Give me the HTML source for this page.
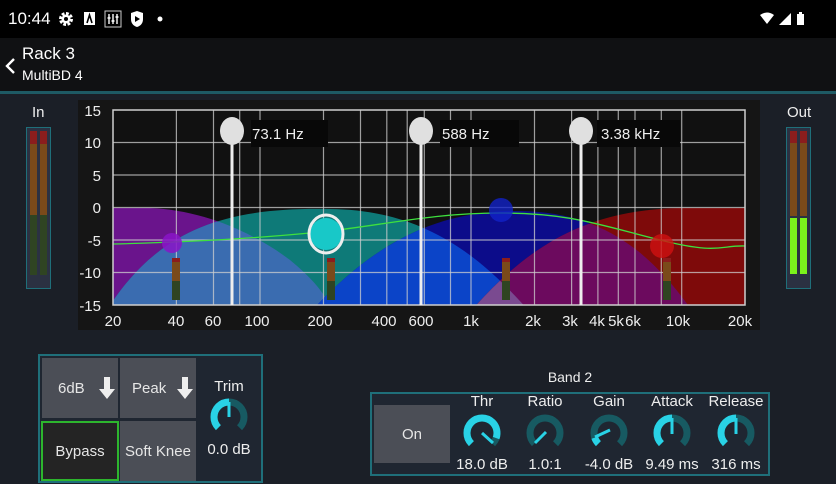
<!DOCTYPE html>
<html><head><meta charset="utf-8">
<style>
*{margin:0;padding:0;box-sizing:border-box}
body{width:836px;height:484px;overflow:hidden;background:#1b1f27;font-family:"Liberation Sans",sans-serif;color:#eee;position:relative}
.abs{position:absolute}
.btn{position:absolute;background:#4b4e56;color:#e6e6e6;font-size:15px;display:flex;align-items:center;justify-content:center}
.lbl{position:absolute;font-size:15px;color:#eee;text-align:center;width:80px}
</style></head><body>
<div class="abs" style="left:0;top:0;width:836px;height:38px;background:#000"></div>
<div class="abs" style="left:8px;top:9px;font-size:17px;color:#fff">10:44</div>
<svg class="abs" style="left:56px;top:9px" width="120" height="20" viewBox="0 0 120 20">
 <circle cx="10" cy="10" r="5" fill="none" stroke="#fff" stroke-width="4" stroke-dasharray="2.5 1.4"/><circle cx="10" cy="10" r="4.5" fill="#fff"/><circle cx="10" cy="10" r="2" fill="#000"/>
 <rect x="28" y="3" width="11" height="13" fill="#fff"/><path d="M31 14 L33.5 6 L36 14" stroke="#000" stroke-width="1.6" fill="none"/>
 <rect x="49" y="2" width="16" height="16" fill="none" stroke="#ccc" stroke-width="1"/><path d="M53 5v10M57 5v10M61 5v10" stroke="#fff" stroke-width="1.4"/><path d="M51.5 9h3M55.5 12h3M59.5 8h3" stroke="#fff" stroke-width="1.5"/>
 <path d="M75 4 L81 2 L87 4 L87 10 Q87 16 81 18 Q75 16 75 10Z" fill="#fff"/><path d="M79 7 L84 10 L79 13Z" fill="#000"/>
 <circle cx="104" cy="10" r="2.5" fill="#fff"/>
</svg>
<svg class="abs" style="left:758px;top:10px" width="54" height="18" viewBox="0 0 54 18">
 <path d="M2 5 Q9 0 16 5 L9 14Z" fill="#fff"/><path d="M21 15 L33 3 L33 15Z" fill="#fff"/><rect x="39" y="4" width="7" height="11" fill="#fff"/><rect x="41" y="2" width="3" height="2" fill="#fff"/>
</svg>
<div class="abs" style="left:0;top:38px;width:836px;height:54px;background:#101113"></div>
<svg class="abs" style="left:4px;top:57px" width="12" height="18"><path d="M10 2 L3 9 L10 16" stroke="#fff" stroke-width="2.4" fill="none"/></svg>
<div class="abs" style="left:22px;top:44px;font-size:17px;color:#fff">Rack 3</div>
<div class="abs" style="left:22px;top:67px;font-size:14px;color:#fff">MultiBD 4</div>
<div class="abs" style="left:0;top:91px;width:836px;height:3px;background:#1e5a64"></div>

<div class="abs" style="left:32px;top:104px;font-size:15px">In</div>
<div class="abs" style="left:26px;top:127px;width:25px;height:162px;border:1px solid #1f6f7a;background:#2b3142"></div>
<div class="abs" style="left:30px;top:131px;width:7px;height:13px;background:#8b1d1d"></div><div class="abs" style="left:40px;top:131px;width:7px;height:13px;background:#8b1d1d"></div>
<div class="abs" style="left:30px;top:144px;width:7px;height:71px;background:#7a4a1a"></div><div class="abs" style="left:40px;top:144px;width:7px;height:71px;background:#7a4a1a"></div>
<div class="abs" style="left:30px;top:215px;width:7px;height:60px;background:#2f4422"></div><div class="abs" style="left:40px;top:215px;width:7px;height:60px;background:#2f4422"></div>

<div class="abs" style="left:787px;top:104px;font-size:15px">Out</div>
<div class="abs" style="left:786px;top:127px;width:25px;height:162px;border:1px solid #1f6f7a;background:#2b3142"></div>
<div class="abs" style="left:790px;top:131px;width:7px;height:12px;background:#8b1d1d"></div><div class="abs" style="left:800px;top:131px;width:7px;height:12px;background:#8b1d1d"></div>
<div class="abs" style="left:790px;top:143px;width:7px;height:73px;background:#7a4a1a"></div><div class="abs" style="left:800px;top:143px;width:7px;height:73px;background:#7a4a1a"></div>
<div class="abs" style="left:790px;top:218px;width:7px;height:56px;background:#7cf21c"></div><div class="abs" style="left:800px;top:218px;width:7px;height:56px;background:#7cf21c"></div>

<svg class="abs" style="left:0;top:0" width="836" height="484" viewBox="0 0 836 484">
<defs>
 <clipPath id="plot"><rect x="113" y="110" width="632" height="195"/></clipPath>
 <clipPath id="cT"><path id="pT" d="M95,330 C150,230 220,207 330,209 C420,210 480,250 545,330 Z"/></clipPath>
 <clipPath id="cB"><path d="M295,330 C370,240 440,210 520,211 C610,212 660,260 705,330 Z"/></clipPath>
</defs>
<rect x="78" y="100" width="682" height="230" fill="#151515"/>
<g clip-path="url(#plot)">
 <rect x="113" y="110" width="632" height="195" fill="#111"/>
 <path d="M100,208 L150,208 C200,210 250,230 290,260 C320,285 330,300 340,330 L100,330 Z" fill="#6a148c"/>
 <path d="M95,330 C150,230 220,207 330,209 C420,210 480,250 545,330 Z" fill="#0e7a78"/>
 <path clip-path="url(#cT)" d="M100,208 L150,208 C200,210 250,230 290,260 C320,285 330,300 340,330 L100,330 Z" fill="#3a6cb0"/>
 <path d="M295,330 C370,240 440,210 520,211 C610,212 660,260 705,330 Z" fill="#0c0c8a"/>
 <path clip-path="url(#cT)" d="M295,330 C370,240 440,210 520,211 C610,212 660,260 705,330 Z" fill="#0b44c8"/>
 <path d="M455,330 C520,250 580,210 680,208 L760,208 L760,330 Z" fill="#7e0a0a"/>
 <path clip-path="url(#cB)" d="M455,330 C520,250 580,210 680,208 L760,208 L760,330 Z" fill="#6c0a5e"/>
 <g clip-path="url(#cT)"><path clip-path="url(#cB)" d="M455,330 C520,250 580,210 680,208 L760,208 L760,330 Z" fill="#7a4a90"/></g>
 <g stroke="#cfcfcf" stroke-opacity="0.75" stroke-width="1.2">
  <path d="M113 142.5H745M113 175H745M113 207.5H745M113 240H745M113 272.5H745"/>
  <path d="M176.4 110V305M213.5 110V305M239.7 110V305M260 110V305M323.5 110V305M360.5 110V305M386.8 110V305M407.2 110V305M424.3 110V305M450.5 110V305M471 110V305M534.5 110V305M571.6 110V305M597.9 110V305M618.3 110V305M635 110V305M661.3 110V305M681.7 110V305"/>
 </g>
 <path d="M113,244 C200,242 260,238 320,232 S430,213 500,213 S600,225 660,240 S720,245 745,246" stroke="#3ee03e" stroke-width="1.3" fill="none"/>
 <circle cx="172" cy="243" r="10" fill="#8a14c8" opacity="0.85"/>
 <circle cx="501" cy="210" r="12" fill="#1222c8" opacity="0.8"/>
 <circle cx="662" cy="246" r="12" fill="#d01010" opacity="0.8"/>
 <circle cx="326" cy="234" r="16" fill="#18c8c8"/>
 <ellipse cx="326" cy="234" rx="17" ry="19" fill="none" stroke="#eee" stroke-width="3"/>
 <g>
  <rect x="172" y="258" width="8" height="4" fill="#8b1d1d"/><rect x="172" y="262" width="8" height="19" fill="#7a4a1a"/><rect x="172" y="281" width="8" height="19" fill="#2f4422"/>
  <rect x="327" y="258" width="8" height="4" fill="#8b1d1d"/><rect x="327" y="262" width="8" height="19" fill="#7a4a1a"/><rect x="327" y="281" width="8" height="19" fill="#2f4422"/>
  <rect x="502" y="258" width="8" height="4" fill="#8b1d1d"/><rect x="502" y="262" width="8" height="19" fill="#7a4a1a"/><rect x="502" y="281" width="8" height="19" fill="#2f4422"/>
  <rect x="663" y="258" width="8" height="4" fill="#8b1d1d"/><rect x="663" y="262" width="8" height="19" fill="#7a4a1a"/><rect x="663" y="281" width="8" height="19" fill="#2f4422"/>
 </g>
</g>
<rect x="113" y="110" width="632" height="195" fill="none" stroke="#cfcfcf" stroke-width="1.5"/>
<g fill="#eee">
 <path d="M230.5 131h3v174h-3zM419.5 131h3v174h-3zM579.5 131h3v174h-3z"/>
 <ellipse cx="232" cy="131" rx="12" ry="14" fill="#e0e0e0"/><ellipse cx="421" cy="131" rx="12" ry="14" fill="#e0e0e0"/><ellipse cx="581" cy="131" rx="12" ry="14" fill="#e0e0e0"/>
</g>
<rect x="251" y="120" width="77" height="27" fill="#080808"/><rect x="440" y="120" width="79" height="27" fill="#080808"/><rect x="597" y="120" width="83" height="27" fill="#080808"/>
<g font-family="Liberation Sans, sans-serif" font-size="15" fill="#eee">
 <text x="252" y="139">73.1 Hz</text><text x="442" y="139">588 Hz</text><text x="601" y="139">3.38 kHz</text>
 <g text-anchor="end"><text x="101" y="116">15</text><text x="101" y="148">10</text><text x="101" y="181">5</text><text x="101" y="213">0</text><text x="101" y="246">-5</text><text x="101" y="278">-10</text><text x="101" y="311">-15</text></g>
 <g text-anchor="middle"><text x="113" y="326">20</text><text x="176" y="326">40</text><text x="213" y="326">60</text><text x="257" y="326">100</text><text x="320" y="326">200</text><text x="384" y="326">400</text><text x="421" y="326">600</text><text x="471" y="326">1k</text><text x="533" y="326">2k</text><text x="570" y="326">3k</text><text x="597" y="326">4k</text><text x="616" y="326">5k</text><text x="633" y="326">6k</text><text x="678" y="326">10k</text><text x="740" y="326">20k</text></g>
</g>
</svg>

<div class="abs" style="left:38px;top:354px;width:225px;height:129px;border:2px solid #1f6f7a;background:#1f2631"></div>
<div class="btn" style="left:42px;top:358px;width:76px;height:60px;justify-content:flex-start;padding-left:16px">6dB</div>
<svg class="abs" style="left:98px;top:376px" width="18" height="24"><path d="M6 1h6v12h5L9 23 1 13h5z" fill="#eee"/></svg>
<div class="btn" style="left:120px;top:358px;width:76px;height:60px;justify-content:flex-start;padding-left:12px">Peak</div>
<svg class="abs" style="left:176px;top:376px" width="18" height="24"><path d="M6 1h6v12h5L9 23 1 13h5z" fill="#eee"/></svg>
<div class="btn" style="left:41px;top:421px;width:78px;height:60px;background:#242424;border:2px solid #2db52d">Bypass</div>
<div class="btn" style="left:120px;top:421px;width:76px;height:60px">Soft Knee</div>
<div class="lbl" style="left:189px;top:378px">Trim</div>
<div class="lbl" style="left:189px;top:441px">0.0 dB</div>

<div class="lbl" style="left:530px;top:369px;font-size:14px">Band 2</div>
<div class="abs" style="left:370px;top:392px;width:400px;height:84px;border:2px solid #1f6f7a;background:#1f2631"></div>
<div class="btn" style="left:374px;top:405px;width:76px;height:58px">On</div>
<div class="lbl" style="left:442px;top:393px">Thr</div><div class="lbl" style="left:442px;top:456px">18.0 dB</div>
<div class="lbl" style="left:505px;top:393px">Ratio</div><div class="lbl" style="left:505px;top:456px">1.0:1</div>
<div class="lbl" style="left:569px;top:393px">Gain</div><div class="lbl" style="left:569px;top:456px">-4.0 dB</div>
<div class="lbl" style="left:632px;top:393px">Attack</div><div class="lbl" style="left:632px;top:456px">9.49 ms</div>
<div class="lbl" style="left:696px;top:393px">Release</div><div class="lbl" style="left:696px;top:456px">316 ms</div>

<svg class="abs" style="left:0;top:0" width="836" height="484" viewBox="0 0 836 484">
 <g fill="none" stroke-width="7">
  <!-- Trim -->
  <g transform="translate(229,417)"><circle r="15" stroke="#175a62" stroke-dasharray="70.7 100" transform="rotate(135)"/><circle r="15" stroke="#29d2e6" stroke-dasharray="35.3 100" transform="rotate(135)"/><path d="M0 0V-15" stroke="#29d2e6" stroke-width="3"/></g>
  <!-- Thr -->
  <g transform="translate(482,433)"><circle r="15" stroke="#175a62" stroke-dasharray="70.7 100" transform="rotate(135)"/><circle r="15" stroke="#29d2e6" stroke-dasharray="64 100" transform="rotate(135)"/><path d="M0 0L11 10" stroke="#29d2e6" stroke-width="3"/></g>
  <!-- Ratio -->
  <g transform="translate(545,433)"><circle r="15" stroke="#175a62" stroke-dasharray="70.7 100" transform="rotate(135)"/><path d="M1 -1L-10 10" stroke="#29d2e6" stroke-width="3"/></g>
  <!-- Gain -->
  <g transform="translate(609,433)"><circle r="15" stroke="#175a62" stroke-dasharray="70.7 100" transform="rotate(135)"/><circle r="15" stroke="#29d2e6" stroke-dasharray="7 100" transform="rotate(135)"/><path d="M1 -3L-14 4" stroke="#29d2e6" stroke-width="3"/></g>
  <!-- Attack -->
  <g transform="translate(672,433)"><circle r="15" stroke="#175a62" stroke-dasharray="70.7 100" transform="rotate(135)"/><circle r="15" stroke="#29d2e6" stroke-dasharray="35.3 100" transform="rotate(135)"/><path d="M0 1V-15" stroke="#29d2e6" stroke-width="3"/></g>
  <!-- Release -->
  <g transform="translate(736,433)"><circle r="15" stroke="#175a62" stroke-dasharray="70.7 100" transform="rotate(135)"/><circle r="15" stroke="#29d2e6" stroke-dasharray="35.3 100" transform="rotate(135)"/><path d="M0 1V-15" stroke="#29d2e6" stroke-width="3"/></g>
 </g>
</svg>
</body></html>
